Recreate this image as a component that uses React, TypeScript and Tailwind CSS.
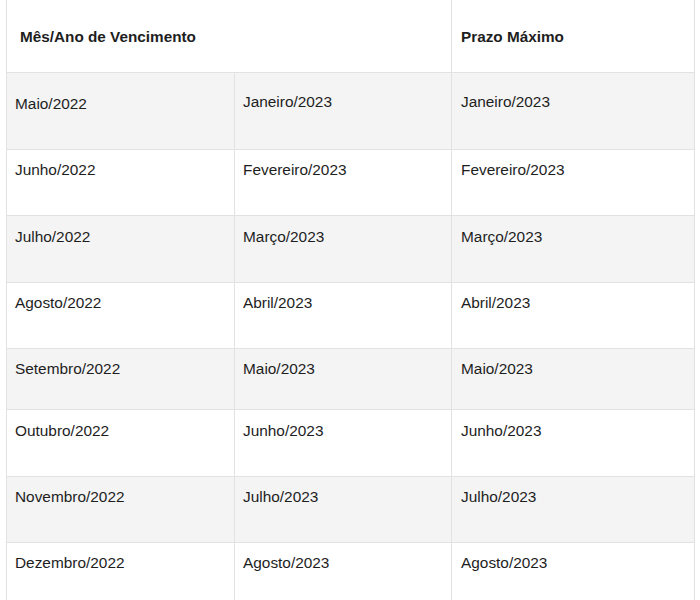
const rows = [
  { venc: "Maio/2022", prazo: "Janeiro/2023", max: "Janeiro/2023", h: "h-[77px]", pt: "pt-[20px]", ptFirst: "pt-[22px]" },
  { venc: "Junho/2022", prazo: "Fevereiro/2023", max: "Fevereiro/2023", h: "h-[66px]", pt: "pt-[11px]", ptFirst: "pt-[11px]" },
  { venc: "Julho/2022", prazo: "Março/2023", max: "Março/2023", h: "h-[67px]", pt: "pt-[12px]", ptFirst: "pt-[12px]" },
  { venc: "Agosto/2022", prazo: "Abril/2023", max: "Abril/2023", h: "h-[66px]", pt: "pt-[11px]", ptFirst: "pt-[11px]" },
  { venc: "Setembro/2022", prazo: "Maio/2023", max: "Maio/2023", h: "h-[61px]", pt: "pt-[11px]", ptFirst: "pt-[11px]" },
  { venc: "Outubro/2022", prazo: "Junho/2023", max: "Junho/2023", h: "h-[67px]", pt: "pt-[12px]", ptFirst: "pt-[12px]" },
  { venc: "Novembro/2022", prazo: "Julho/2023", max: "Julho/2023", h: "h-[66px]", pt: "pt-[11px]", ptFirst: "pt-[11px]" },
  { venc: "Dezembro/2022", prazo: "Agosto/2023", max: "Agosto/2023", h: "h-[66px]", pt: "pt-[11px]", ptFirst: "pt-[11px]" },
];

export default function App() {
  return (
    <div className="w-[700px] h-[600px] overflow-hidden bg-white font-['Liberation_Sans',Arial,sans-serif] text-[15.4px] leading-[17px] text-[#1e1e1e]">
      <div className="ml-[6px] w-[689px] border-l border-[#e2e2e2] grid grid-cols-[228px_217px_243px]">
        {/* Header */}
        <div className="col-span-2 h-[73px] border-r border-b border-[#e2e2e2] bg-white flex items-center pl-[13px] text-[15.3px] font-bold">
          Mês/Ano de Vencimento
        </div>
        <div className="h-[73px] border-r border-b border-[#e2e2e2] bg-white flex items-center pl-[9px] text-[15.3px] font-bold">
          Prazo Máximo
        </div>

        {rows.map((r, i) => {
          const bg = i % 2 === 0 ? "bg-[#f4f4f4]" : "bg-white";
          return [
            <div key={i + "a"} className={`${r.h} ${bg} ${r.ptFirst} pl-[8px] border-r border-b border-[#e2e2e2]`}>
              {r.venc}
            </div>,
            <div key={i + "b"} className={`${r.h} ${bg} ${r.pt} pl-[8px] border-r border-b border-[#e2e2e2]`}>
              {r.prazo}
            </div>,
            <div key={i + "c"} className={`${r.h} ${bg} ${r.pt} pl-[9px] border-r border-b border-[#e2e2e2]`}>
              {r.max}
            </div>,
          ];
        })}
      </div>
    </div>
  );
}
